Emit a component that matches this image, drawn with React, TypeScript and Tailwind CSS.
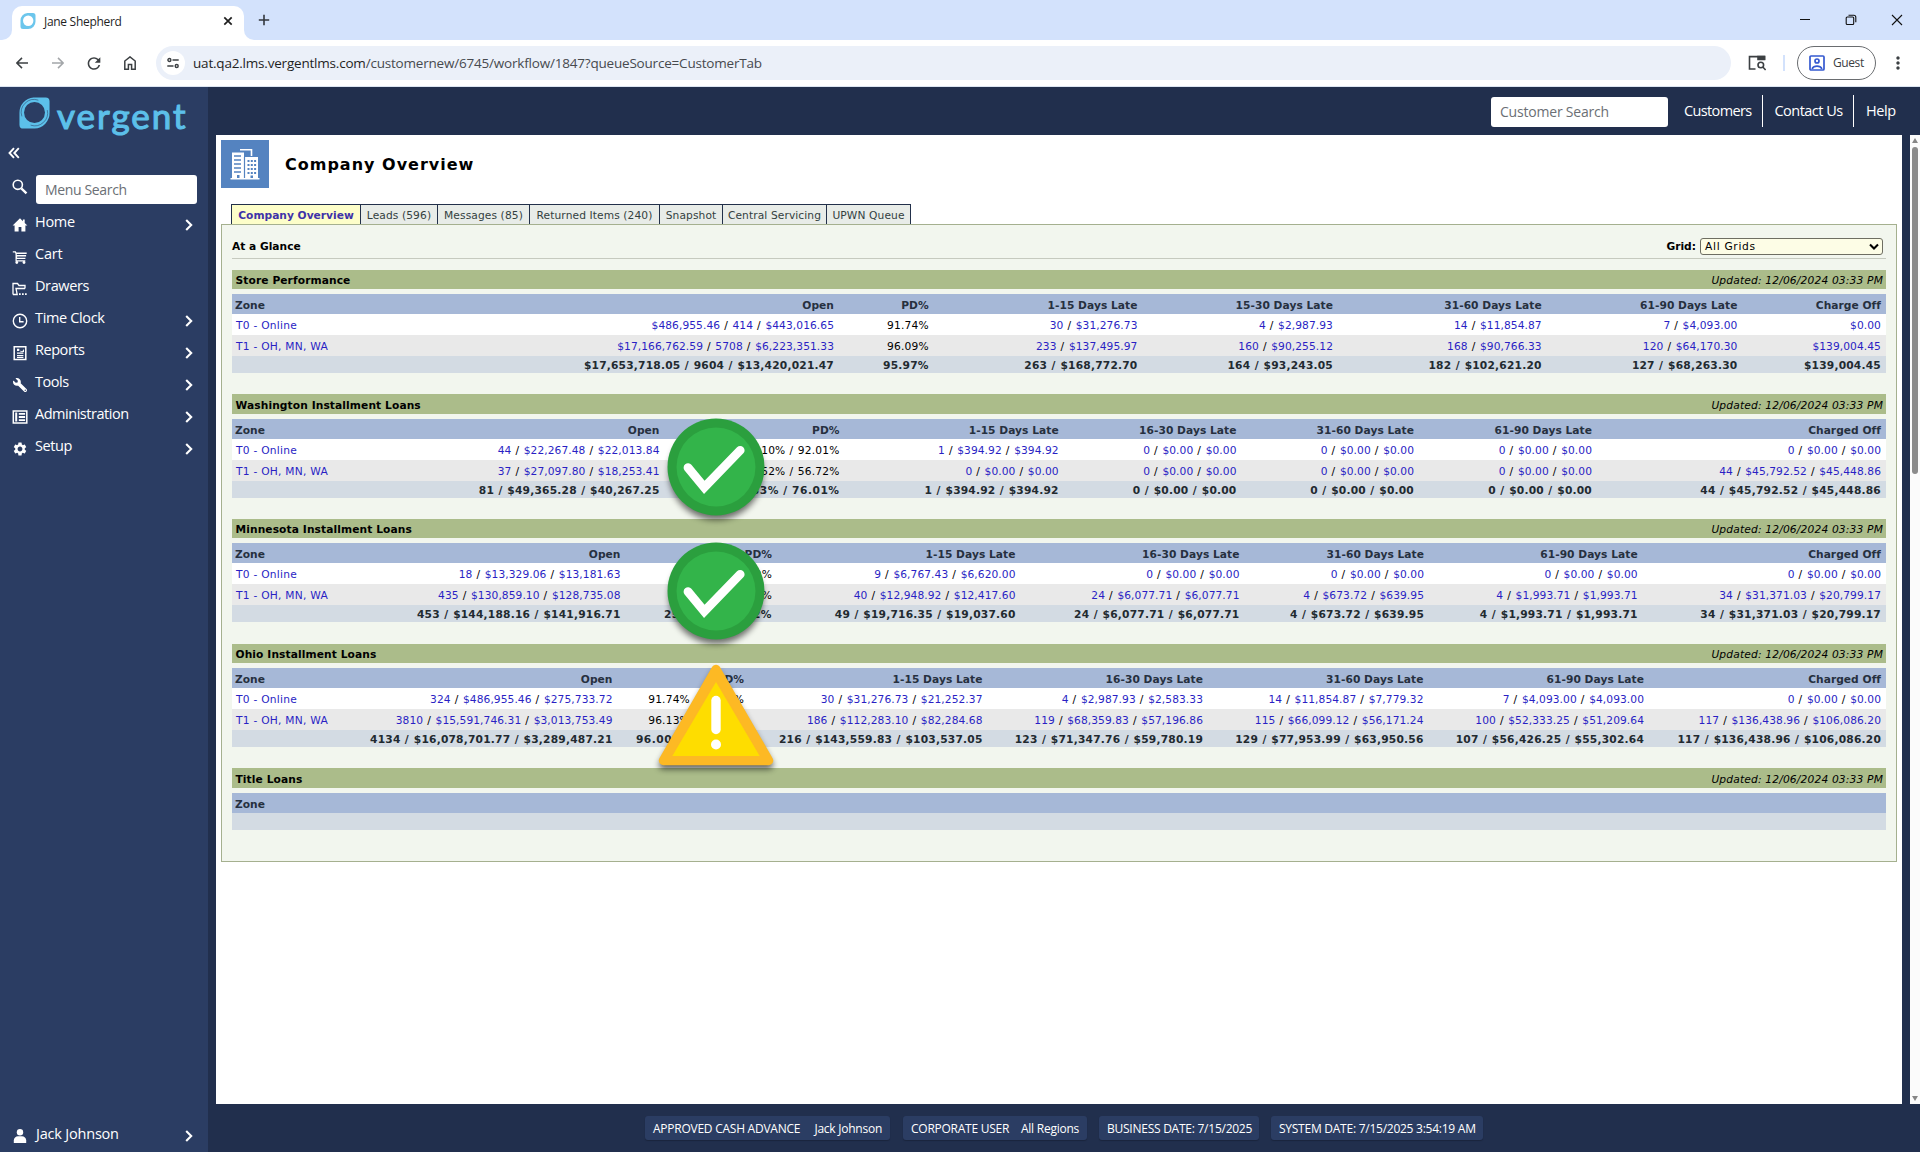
import React from "react";
import { FaWrench } from "react-icons/fa";
import { MdSettings, MdRefresh, MdMoreVert } from "react-icons/md";

type Cell = string;
type Zone = { name: string; cells: Cell[] };
type Report = {
  title: string;
  cols: string;
  barH: string;
  gap: string;
  heads: string[];
  zones: Zone[];
  totals: string[];
};

const reports: Report[] = [
  {
    title: "Store Performance",
    barH: "h-[19px]",
    gap: "mb-[21px]",
    cols: "grid-cols-[200px_402px_94.7px_208.8px_195.5px_208.7px_195.8px_143.5px]",
    heads: ["Open", "PD%", "1-15 Days Late", "15-30 Days Late", "31-60 Days Late", "61-90 Days Late", "Charge Off"],
    zones: [
      { name: "T0 - Online", cells: ["$486,955.46 / 414 / $443,016.65", "91.74%", "30 / $31,276.73", "4 / $2,987.93", "14 / $11,854.87", "7 / $4,093.00", "$0.00"] },
      { name: "T1 - OH, MN, WA", cells: ["$17,166,762.59 / 5708 / $6,223,351.33", "96.09%", "233 / $137,495.97", "160 / $90,255.12", "168 / $90,766.33", "120 / $64,170.30", "$139,004.45"] },
    ],
    totals: ["$17,653,718.05 / 9604 / $13,420,021.47", "95.97%", "263 / $168,772.70", "164 / $93,243.05", "182 / $102,621.20", "127 / $68,263.30", "$139,004.45"],
  },
  {
    title: "Washington Installment Loans",
    barH: "h-[20px]",
    gap: "mb-[21px]",
    cols: "grid-cols-[200px_227.5px_180px_219.2px_177.8px_177.5px_178px_289px]",
    heads: ["Open", "PD%", "1-15 Days Late", "16-30 Days Late", "31-60 Days Late", "61-90 Days Late", "Charged Off"],
    zones: [
      { name: "T0 - Online", cells: ["44 / $22,267.48 / $22,013.84", "92.10% / 92.01%", "1 / $394.92 / $394.92", "0 / $0.00 / $0.00", "0 / $0.00 / $0.00", "0 / $0.00 / $0.00", "0 / $0.00 / $0.00"] },
      { name: "T1 - OH, MN, WA", cells: ["37 / $27,097.80 / $18,253.41", "61.52% / 56.72%", "0 / $0.00 / $0.00", "0 / $0.00 / $0.00", "0 / $0.00 / $0.00", "0 / $0.00 / $0.00", "44 / $45,792.52 / $45,448.86"] },
    ],
    totals: ["81 / $49,365.28 / $40,267.25", "75.33% / 76.01%", "1 / $394.92 / $394.92", "0 / $0.00 / $0.00", "0 / $0.00 / $0.00", "0 / $0.00 / $0.00", "44 / $45,792.52 / $45,448.86"],
  },
  {
    title: "Minnesota Installment Loans",
    barH: "h-[19px]",
    gap: "mb-[22px]",
    cols: "grid-cols-[200px_188.5px_151.5px_243.5px_224px_184.5px_213.7px_243.3px]",
    heads: ["Open", "PD%", "1-15 Days Late", "16-30 Days Late", "31-60 Days Late", "61-90 Days Late", "Charged Off"],
    zones: [
      { name: "T0 - Online", cells: ["18 / $13,329.06 / $13,181.63", "50.77% / 50.22%", "9 / $6,767.43 / $6,620.00", "0 / $0.00 / $0.00", "0 / $0.00 / $0.00", "0 / $0.00 / $0.00", "0 / $0.00 / $0.00"] },
      { name: "T1 - OH, MN, WA", cells: ["435 / $130,859.10 / $128,735.08", "16.06% / 16.39%", "40 / $12,948.92 / $12,417.60", "24 / $6,077.71 / $6,077.71", "4 / $673.72 / $639.95", "4 / $1,993.71 / $1,993.71", "34 / $31,371.03 / $20,799.17"] },
    ],
    totals: ["453 / $144,188.16 / $141,916.71", "25.42% / 25.82%", "49 / $19,716.35 / $19,037.60", "24 / $6,077.71 / $6,077.71", "4 / $673.72 / $639.95", "4 / $1,993.71 / $1,993.71", "34 / $31,371.03 / $20,799.17"],
  },
  {
    title: "Ohio Installment Loans",
    barH: "h-[19px]",
    gap: "mb-[21px]",
    cols: "grid-cols-[200px_180.5px_131.5px_238.5px_220.5px_220.5px_220.5px_237px]",
    heads: ["Open", "PD%", "1-15 Days Late", "16-30 Days Late", "31-60 Days Late", "61-90 Days Late", "Charged Off"],
    zones: [
      { name: "T0 - Online", cells: ["324 / $486,955.46 / $275,733.72", "91.74% / 91.80%", "30 / $31,276.73 / $21,252.37", "4 / $2,987.93 / $2,583.33", "14 / $11,854.87 / $7,779.32", "7 / $4,093.00 / $4,093.00", "0 / $0.00 / $0.00"] },
      { name: "T1 - OH, MN, WA", cells: ["3810 / $15,591,746.31 / $3,013,753.49", "96.13% / 91.80%", "186 / $112,283.10 / $82,284.68", "119 / $68,359.83 / $57,196.86", "115 / $66,099.12 / $56,171.24", "100 / $52,333.25 / $51,209.64", "117 / $136,438.96 / $106,086.20"] },
    ],
    totals: ["4134 / $16,078,701.77 / $3,289,487.21", "96.00% / 91.30%", "216 / $143,559.83 / $103,537.05", "123 / $71,347.76 / $59,780.19", "129 / $77,953.99 / $63,950.56", "107 / $56,426.25 / $55,302.64", "117 / $136,438.96 / $106,086.20"],
  },
  {
    title: "Title Loans",
    barH: "h-[20px]",
    gap: "",
    cols: "grid-cols-[200px]",
    heads: [],
    zones: [],
    totals: [],
  },
];

function Amounts({ text, link, className = "" }: { text: string; link: boolean; className?: string }) {
  const parts = text.split(" / ");
  return (
    <div className={"flex justify-end whitespace-nowrap " + className}>
      <span className="whitespace-pre">
        {parts.map((p, i) => (
          <React.Fragment key={i}>
            {i > 0 && <span className="tracking-[0.66px]"> / </span>}
            <span className={link ? "text-[#2a1fc4]" : ""}>{p}</span>
          </React.Fragment>
        ))}
      </span>
    </div>
  );
}

function ReportTable({ r }: { r: Report }) {
  return (
    <section className={r.gap}>
      <div className={"flex items-center justify-between bg-[#abbc8a] pl-[3.5px] pr-[3px] pt-[2px] text-black " + r.barH}>
        <h3 className="font-bold tracking-[0.1px]">{r.title}</h3>
        <span className="italic tracking-[0.17px]">Updated: 12/06/2024 03:33 PM</span>
      </div>
      <div className={"mt-[5px] grid h-[20px] items-center bg-[#a6b8d7] pt-[3px] font-bold text-[#26303f] " + r.cols}>
        <div className="pl-[3px]">Zone</div>
        {r.heads.map((h) => (
          <div key={h} className="whitespace-nowrap text-right tracking-[0.04px]">{h}</div>
        ))}
      </div>
      {r.zones.map((z, i) => (
        <div key={z.name} className={"grid h-[21px] items-center pt-[2px] text-black " + (i % 2 ? "bg-[#e9e9e9] " : "bg-white ") + r.cols}>
          <div className="pl-[4px] tracking-[0.25px] text-[#2a1fc4]">{z.name}</div>
          {z.cells.map((c, k) => (
            <Amounts key={k} text={c} link={k !== 1} className={k === 1 ? "tracking-[0.18px]" : "tracking-[0.07px]"} />
          ))}
        </div>
      ))}
      <div className={"grid h-[17px] items-center bg-[#d3dbe3] pt-[2px] font-bold tracking-[0.2px] text-[#222a30] " + r.cols}>
        <div />
        {r.totals.map((c, k) => (
          <Amounts key={k} text={c} link={false} className={k === 1 && c.length > 8 ? "tracking-[0.5px]" : ""} />
        ))}
      </div>
    </section>
  );
}

function CheckBadge({ className }: { className: string }) {
  return (
    <svg viewBox="0 0 120 120" className={"absolute h-[120px] w-[120px] " + className}>
      <defs>
        <filter id="soft" x="-20%" y="-20%" width="140%" height="150%">
          <feGaussianBlur stdDeviation="3" />
        </filter>
      </defs>
      <circle cx="60" cy="66" r="47" fill="#000" opacity=".55" filter="url(#soft)" />
      <circle cx="60" cy="60" r="48.5" fill="#2b9f3e" />
      <circle cx="60" cy="60" r="39.5" fill="#33b44a" />
      <path d="M32 60.6 48.3 80.3 84.2 43.3" fill="none" stroke="#fff" strokeWidth="8.8" strokeLinecap="round" strokeLinejoin="miter" />
    </svg>
  );
}

function WarningBadge({ className }: { className: string }) {
  return (
    <svg viewBox="0 0 130 120" className={"absolute h-[120px] w-[130px] " + className}>
      <path d="M65 14 118 105H12Z" fill="#000" opacity=".6" stroke="#000" strokeWidth="8" strokeLinejoin="round" filter="url(#soft)" />
      <path d="M65 9.500 117.500 100.500H12.500Z" fill="#fdb924" stroke="#fdb924" strokeWidth="9.500" strokeLinejoin="round" />
      <path d="M65 22 108.700 96H21.300Z" fill="#fedd00" />
      <path d="M65 40.500V69.500" stroke="#fff" strokeWidth="9.400" strokeLinecap="round" />
      <circle cx="65" cy="84.500" r="5" fill="#fff" />
    </svg>
  );
}

const Chevron = () => (
  <svg viewBox="0 0 8 12" className="mt-[3px] h-[12px] w-[8px] shrink-0" fill="none" stroke="#fff" strokeWidth="2.1">
    <path d="M1.200 1 6.200 6l-5 5" />
  </svg>
);

const I = ({ children }: { children: React.ReactNode }) => (
  <svg viewBox="0 0 16 16" className="h-4 w-4" fill="#fff">
    {children}
  </svg>
);

const menu: { label: string; icon: React.ReactNode; more: boolean; cls: string }[] = [
  {
    label: "Home", more: true, cls: "tracking-[-0.3px]",
    icon: <I><path d="M8 1.300.6 8.600h2V14.500h4V10h2.800v4.500h4V8.600h2L12.700 6V2.600h-1.800v1.600z" /></I>,
  },
  {
    label: "Cart", more: false, cls: "tracking-[-0.2px]",
    icon: <I><path d="M.8 2.200h3l.6 1.300h10.300v1.400H4.800v1.200h9.300v1.400H5.100v1.200h8.300v1.400H4.700v1.100h8.600v1.200H3.500V4.800L2.900 3.500H.8z" /><circle cx="4.800" cy="13.500" r="1.400" /><circle cx="12" cy="13.500" r="1.400" /></I>,
  },
  {
    label: "Drawers", more: false, cls: "tracking-[-0.4px]",
    icon: <I><path d="M1 13.500V2.500h4.500l1.500 2h6v3M1 13.500h4.200L4 7.500h9" fill="none" stroke="#fff" strokeWidth="1.300" /><path d="M7 12.300h1.700V14H7zM10 12.300h1.700V14H10zM13 12.300h1.700V14H13z" /></I>,
  },
  {
    label: "Time Clock", more: true, cls: "tracking-[-0.35px]",
    icon: <I><circle cx="8" cy="8" r="6.700" fill="none" stroke="#fff" strokeWidth="1.400" /><path d="M7.700 4v4.700h3.900" fill="none" stroke="#fff" strokeWidth="1.400" /></I>,
  },
  {
    label: "Reports", more: true, cls: "tracking-[-0.45px]",
    icon: <I><path d="M2.200 1.700h11.600v12.800H2.200z" fill="none" stroke="#fff" strokeWidth="1.500" /><path d="M5 3.800h2.300V6H5zM8.500 5.500 10 6.500l2-2.500v3H8.500zM5 7.600h6.400v1.200H5zM5 10h6.400v1.200H5zM5 12h6.400v.9H5z" /></I>,
  },
  {
    label: "Tools", more: true, cls: "tracking-[-0.45px]",
    icon: <FaWrench className="h-[14px] w-[14px] -scale-x-100 text-white" />,
  },
  {
    label: "Administration", more: true, cls: "tracking-[-0.47px]",
    icon: <I><path d="M1.300 2h13.500v12H1.300z" fill="none" stroke="#fff" strokeWidth="1.500" /><path d="M3.200 3.500h2v9h-2zM6.800 4h6.300v1.800H6.800zM6.800 7.100h6.300v1.800H6.800zM6.800 10.200h6.300V12H6.800z" /></I>,
  },
  {
    label: "Setup", more: true, cls: "tracking-[-0.4px]",
    icon: <MdSettings className="h-[18px] w-[18px] text-white" />,
  },
];

function Ring({ className }: { className: string }) {
  return (
    <svg viewBox="0 0 34 34" className={className} fill="none">
      <path d="M16 1h12.500q4 0 4 4v11.500A16 16 0 0 1 17 33H5.500q-4 0-4-4V17A15.500 15.500 0 0 1 16 1z" fill="#5cc0ea" />
      <circle cx="17" cy="16.500" r="10.800" fill="#2b3d63" />
      <path d="M4 20.500A13.300 13.300 0 0 1 21 3.800M30.200 14A13.300 13.300 0 0 1 13 29.500" stroke="#2b3d63" strokeWidth=".8" opacity=".7" />
    </svg>
  );
}

function BrowserChrome() {
  return (
    <header>
      <div className="flex h-10 items-end justify-between bg-[#d3e2fc]">
        <div className="flex h-[34px] items-end">
          <div className="h-3 w-3 bg-white"><div className="h-3 w-3 rounded-br-[10px] bg-[#d3e2fc]" /></div>
          <div className="flex h-[34px] w-[232px] items-center rounded-t-[10px] bg-white pb-[5px] pl-2 pr-[11px]">
            <svg viewBox="0 0 16 16" className="h-4 w-4">
              <path d="M7.500 0H13q2.500 0 2.500 2.500V8A7.500 7.500 0 0 1 8 16H3Q.5 16 .5 13.500V8A7.500 7.500 0 0 1 7.500 0z" fill="#6cc6ec" />
              <circle cx="8.200" cy="7.800" r="5.200" fill="#fff" />
            </svg>
            <span className="ml-2 mt-[2px] flex-1 text-[12px] tracking-[-0.3px] text-[#1f1f1f]">Jane Shepherd</span>
            <svg viewBox="0 0 10 10" className="h-[10px] w-[10px]" stroke="#1f1f1f" strokeWidth="1.700"><path d="M1.300 1.300l7.400 7.400M8.700 1.300 1.300 8.700" /></svg>
          </div>
          <div className="h-3 w-3 bg-white"><div className="h-3 w-3 rounded-bl-[10px] bg-[#d3e2fc]" /></div>
          <svg viewBox="0 0 12 12" className="mb-[14px] ml-[2px] h-3 w-3" stroke="#33373d" strokeWidth="1.600"><path d="M6 .8v10.400M.8 6h10.400" /></svg>
        </div>
        <div className="flex h-10 items-center gap-[34px] pr-[17px] text-[#111]">
          <svg viewBox="0 0 12 12" className="h-3 w-3" stroke="currentColor"><path d="M1 5.500h10" /></svg>
          <svg viewBox="0 0 12 12" className="h-3 w-3" fill="none" stroke="currentColor" strokeWidth="1.100"><rect x="1.200" y="3" width="7.500" height="7.500" rx="1" /><path d="M3.500 1.300h5.300a2 2 0 0 1 2 2v5" /></svg>
          <svg viewBox="0 0 12 12" className="h-3 w-3" stroke="currentColor" strokeWidth="1.100"><path d="M1 1l10 10M11 1 1 11" /></svg>
        </div>
      </div>
      <div className="flex h-[47px] items-center border-b border-[#dce5f1] bg-white pl-4">
        <div className="flex w-[140px] items-center gap-6 text-[#3c4043]">
          <svg viewBox="0 0 12 12" className="h-3 w-3" fill="none" stroke="currentColor" strokeWidth="1.500"><path d="M6 .9.9 6 6 11.100M1 6h11" /></svg>
          <svg viewBox="0 0 12 12" className="h-3 w-3 text-[#a3a6a9]" fill="none" stroke="currentColor" strokeWidth="1.500"><path d="M6 .9 11.100 6 6 11.100M11 6H0" /></svg>
          <MdRefresh className="-mx-[4px] h-[19px] w-[20px]" />
          <svg viewBox="0 0 12 14" className="h-[14px] w-3" fill="none" stroke="currentColor" strokeWidth="1.500"><path d="M.8 13.200V5L6 .9 11.200 5v8.200H7.600V8.500H4.400v4.700z" /></svg>
        </div>
        <div className="flex h-[34px] w-[1575px] items-center rounded-full bg-[#ebf0f9] pl-[5px]">
          <div className="flex h-6 w-6 items-center justify-center rounded-full bg-white">
            <svg viewBox="0 0 12 12" className="h-3 w-3" fill="none" stroke="#3c4043" strokeWidth="1.400"><circle cx="2.400" cy="3" r="1.500" /><path d="M5.500 3h6.200M.3 9h6.200" /><circle cx="9.700" cy="9" r="1.500" /></svg>
          </div>
          <span className="ml-2 text-[13.500px] tracking-[-0.2px] text-[#474a4f]"><span className="text-[#1f1f1f]">uat.qa2.lms.vergentlms.com</span>/customernew/6745/workflow/1847?queueSource=CustomerTab</span>
        </div>
        <svg viewBox="0 0 18 16" className="ml-[17px] h-4 w-[18px]" fill="none" stroke="#3c4043" strokeWidth="1.600"><path d="M7.500 14H1.500V1.600h15V5" /><path d="M10 1.600h6.500V4.500H10z" fill="#3c4043" /><circle cx="12.800" cy="10" r="2.800" /><path d="m14.800 12 2.800 3" /></svg>
        <div className="ml-[17px] h-4 w-[2px] bg-[#d3e2fc]" />
        <div className="ml-[12px] flex h-[34px] w-[79px] items-center rounded-full border border-[#6a6d70] pl-[11px]">
          <svg viewBox="0 0 16 16" className="h-4 w-4" fill="none" stroke="#3559d0" strokeWidth="1.700"><rect x="1" y="1" width="14" height="14" rx="1" /><circle cx="8" cy="6" r="2" /><path d="M3 13.800c2-3.500 8-3.500 10 0" /></svg>
          <span className="ml-2 text-[12px] tracking-[-0.4px] text-[#3c4043]">Guest</span>
        </div>
        <MdMoreVert className="ml-[12px] h-5 w-5 text-[#3c4043]" />
      </div>
    </header>
  );
}

function Sidebar() {
  return (
    <aside className="flex w-[208px] flex-col bg-[#2b3d63] text-[14.500px] text-white">
      <div className="flex h-[50px] items-start pl-[18px] pt-[9px]">
        <Ring className="h-[34px] w-[33px]" />
        <span className="ml-[6px] mt-[-1px] font-['Lato'] text-[35px] font-normal leading-[40px] tracking-[2px] text-[#5cc0ea] [-webkit-text-stroke:1.100px_#5cc0ea]">vergent</span>
      </div>
      <svg viewBox="0 0 12 12" className="ml-2 mt-[10px] h-3 w-3" fill="none" stroke="#fff" strokeWidth="1.900"><path d="M6 1.200 1.500 6 6 10.800M10.800 1.200 6.300 6l4.500 4.800" /></svg>
      <div className="mt-[16px] flex h-[29px] items-start">
        <svg viewBox="0 0 16 16" className="ml-3 mt-[4px] h-4 w-4" fill="none" stroke="#fff"><circle cx="5.800" cy="5.800" r="4.600" strokeWidth="1.600" /><path d="m9.300 9.300 5.200 5" strokeWidth="2.300" /></svg>
        <div className="ml-2 flex h-[29px] w-[161px] items-center rounded-[3px] bg-white pl-[9px] text-[14px] tracking-[-0.35px] text-[#6b6f75]">Menu Search</div>
      </div>
      <nav className="mt-[3px]">
        {menu.map((m) => (
          <div key={m.label} className="flex h-[32px] items-center pl-3 pr-[15px]">
            <span className="mt-[3px] flex w-4 justify-center">{m.icon}</span>
            <span className={"-mt-[2px] ml-[7px] flex-1 " + m.cls}>{m.label}</span>
            {m.more && <Chevron />}
          </div>
        ))}
      </nav>
      <div className="mb-[2px] mt-auto flex h-[32px] items-center pl-3 pr-[15px]">
        <span className="mt-[3px] w-4"><I><circle cx="8" cy="4.200" r="3.200" /><path d="M1.800 15V12.500c0-2.500 2-4.300 4.200-4.300h4c2.200 0 4.200 1.800 4.200 4.300V15z" /></I></span>
        <span className="ml-2 flex-1 tracking-[-0.2px]">Jack Johnson</span>
        <Chevron />
      </div>
    </aside>
  );
}

function TopBar() {
  return (
    <div className="flex h-12 items-center text-[14.500px] text-white">
      <div className="ml-[1283px] mt-px flex h-[30px] w-[177px] items-center rounded-[3px] bg-white pl-[9px] text-[14px] tracking-[-0.2px] text-[#6b6f75]">Customer Search</div>
      <span className="ml-[16px] w-[77.500px] whitespace-nowrap tracking-[-0.62px]">Customers</span>
      <span className="flex h-8 w-[92.500px] items-center whitespace-nowrap border-x border-white pl-3 tracking-[-0.52px]">Contact Us</span>
      <span className="ml-3 tracking-[-0.4px]">Help</span>
    </div>
  );
}

const tabs = [
  ["Leads (596)", "w-[77px]"],
  ["Messages (85)", "w-[92px]"],
  ["Returned Items (240)", "w-[130px]"],
  ["Snapshot", "w-[63px]"],
  ["Central Servicing", "w-[104px]"],
  ["UPWN Queue", "w-[84px]"],
];

function CompanyOverview() {
  return (
    <main className="relative h-[969px] w-[1686px] bg-white font-['Verdana','DejaVu_Sans',sans-serif] text-[10.667px] leading-[13px]">
      <div className="flex items-center pl-[5px] pt-[5px]">
        <div className="flex h-12 w-12 items-center justify-center bg-[#5483c0]">
          <svg viewBox="0 0 30 32" className="mt-[-1px] h-8 w-[30px]" fill="#fff">
            <path d="M2 4.500h12V31H2z" /><path d="M15 9h13v22H15z" />
            <path d="M10 1.800h11.500V8" fill="none" stroke="#fff" strokeWidth="1.600" />
            <path d="M.5 30h29v1.500H.5z" />
            <path d="M4 8h7M4 12h7M4 16h7M4 20h7M4 24h7" stroke="#5483c0" strokeWidth="1.700" />
            <path d="M14.500 9v21" stroke="#5483c0" strokeWidth="1.200" />
            <path d="M17.500 13h9M17.500 17h9M17.500 21h9M17.500 25h9" stroke="#5483c0" strokeWidth="1.900" strokeDasharray="2 1.300" />
            <path d="M7 27h2.500v3H7zM20.500 27.500h2.500V30h-2.500z" fill="#5483c0" />
          </svg>
        </div>
        <h1 className="ml-4 mt-[2px] text-[16px] font-bold leading-5 tracking-[1px] text-black">Company Overview</h1>
      </div>
      <div className="ml-[15px] mt-[16px] flex h-5 w-[680px] border-l border-t border-[#22304a] text-[#333f3f]">
        <div className="flex w-[129px] shrink-0 items-center justify-center border-r border-[#22304a] bg-[#fdfec9] pt-px font-bold text-[#3f33a8]">Company Overview</div>
        {tabs.map(([t, w]) => (
          <div key={t} className={"flex shrink-0 items-center justify-center whitespace-nowrap border-r border-[#22304a] bg-[#e8ece8] pt-px tracking-[0.1px] " + w}>{t}</div>
        ))}
      </div>
      <div className="ml-[5px] h-[638px] w-[1676px] border border-[#a5b08f] bg-[#f2f6ee] pl-[10px] pr-[10px] pt-[9px]">
        <div className="flex h-[25px] items-center justify-between border-b border-[#c6cabf] pr-[3px] text-black">
          <h2 className="font-bold">At a Glance</h2>
          <label className="flex items-center gap-1 pt-px font-bold">
            Grid:
            <span className="flex h-[17px] w-[183px] items-center justify-between rounded-[3px] border border-[#6e6e62] bg-[#fdfde6] pl-1 pr-[3px] font-normal tracking-[0.700px]">
              All Grids
              <svg viewBox="0 0 10 8" className="h-2 w-[10px]" fill="none" stroke="#000" strokeWidth="2.100"><path d="M1 1.500 5 5.500l4-4" /></svg>
            </span>
          </label>
        </div>
        <div className="pt-[11px]">
          {reports.map((r) => (
            <ReportTable key={r.title} r={r} />
          ))}
        </div>
      </div>
      <CheckBadge className="left-[440.300px] top-[271.500px]" />
      <CheckBadge className="left-[440.300px] top-[395.500px]" />
      <WarningBadge className="left-[435.300px] top-[525px]" />
    </main>
  );
}

function StatusBar() {
  const box = "flex h-6 items-center justify-between whitespace-nowrap rounded-[3px] bg-[#2b3d63] px-[8px] pt-[2px] tracking-[-0.25px] shadow-[0_1px_1px_#1a253d] ";
  return (
    <footer className="flex h-12 items-center pl-[437px] text-[12px] text-white">
      <div className={box + "w-[245px]"}><span>APPROVED CASH ADVANCE</span><span>Jack Johnson</span></div>
      <div className={box + "ml-[13px] w-[184px]"}><span>CORPORATE USER</span><span>All Regions</span></div>
      <div className={box + "ml-[12px] w-[160px]"}><span>BUSINESS DATE: 7/15/2025</span></div>
      <div className={box + "ml-[12px] w-[212px]"}><span>SYSTEM DATE: 7/15/2025 3:54:19 AM</span></div>
    </footer>
  );
}

export default function App() {
  return (
    <div className="flex h-[1152px] w-[1920px] flex-col overflow-hidden bg-[#212f4d] font-['Open_Sans','Noto_Sans',sans-serif]">
      <BrowserChrome />
      <div className="flex flex-1">
        <Sidebar />
        <div className="w-[1712px]">
          <TopBar />
          <div className="flex justify-between pl-2">
            <CompanyOverview />
            <div className="flex h-[969px] w-[10px] flex-col items-center bg-[#fbfbfb] py-[3px]">
              <div className="h-0 w-0 border-x-[3px] border-b-[5px] border-x-transparent border-b-[#868686]" />
              <div className="mt-[4px] h-[327px] w-[6px] rounded-full bg-[#8b8b8b]" />
              <div className="mt-auto h-0 w-0 border-x-[3px] border-t-[5px] border-x-transparent border-t-[#868686]" />
            </div>
          </div>
          <StatusBar />
        </div>
      </div>
    </div>
  );
}
